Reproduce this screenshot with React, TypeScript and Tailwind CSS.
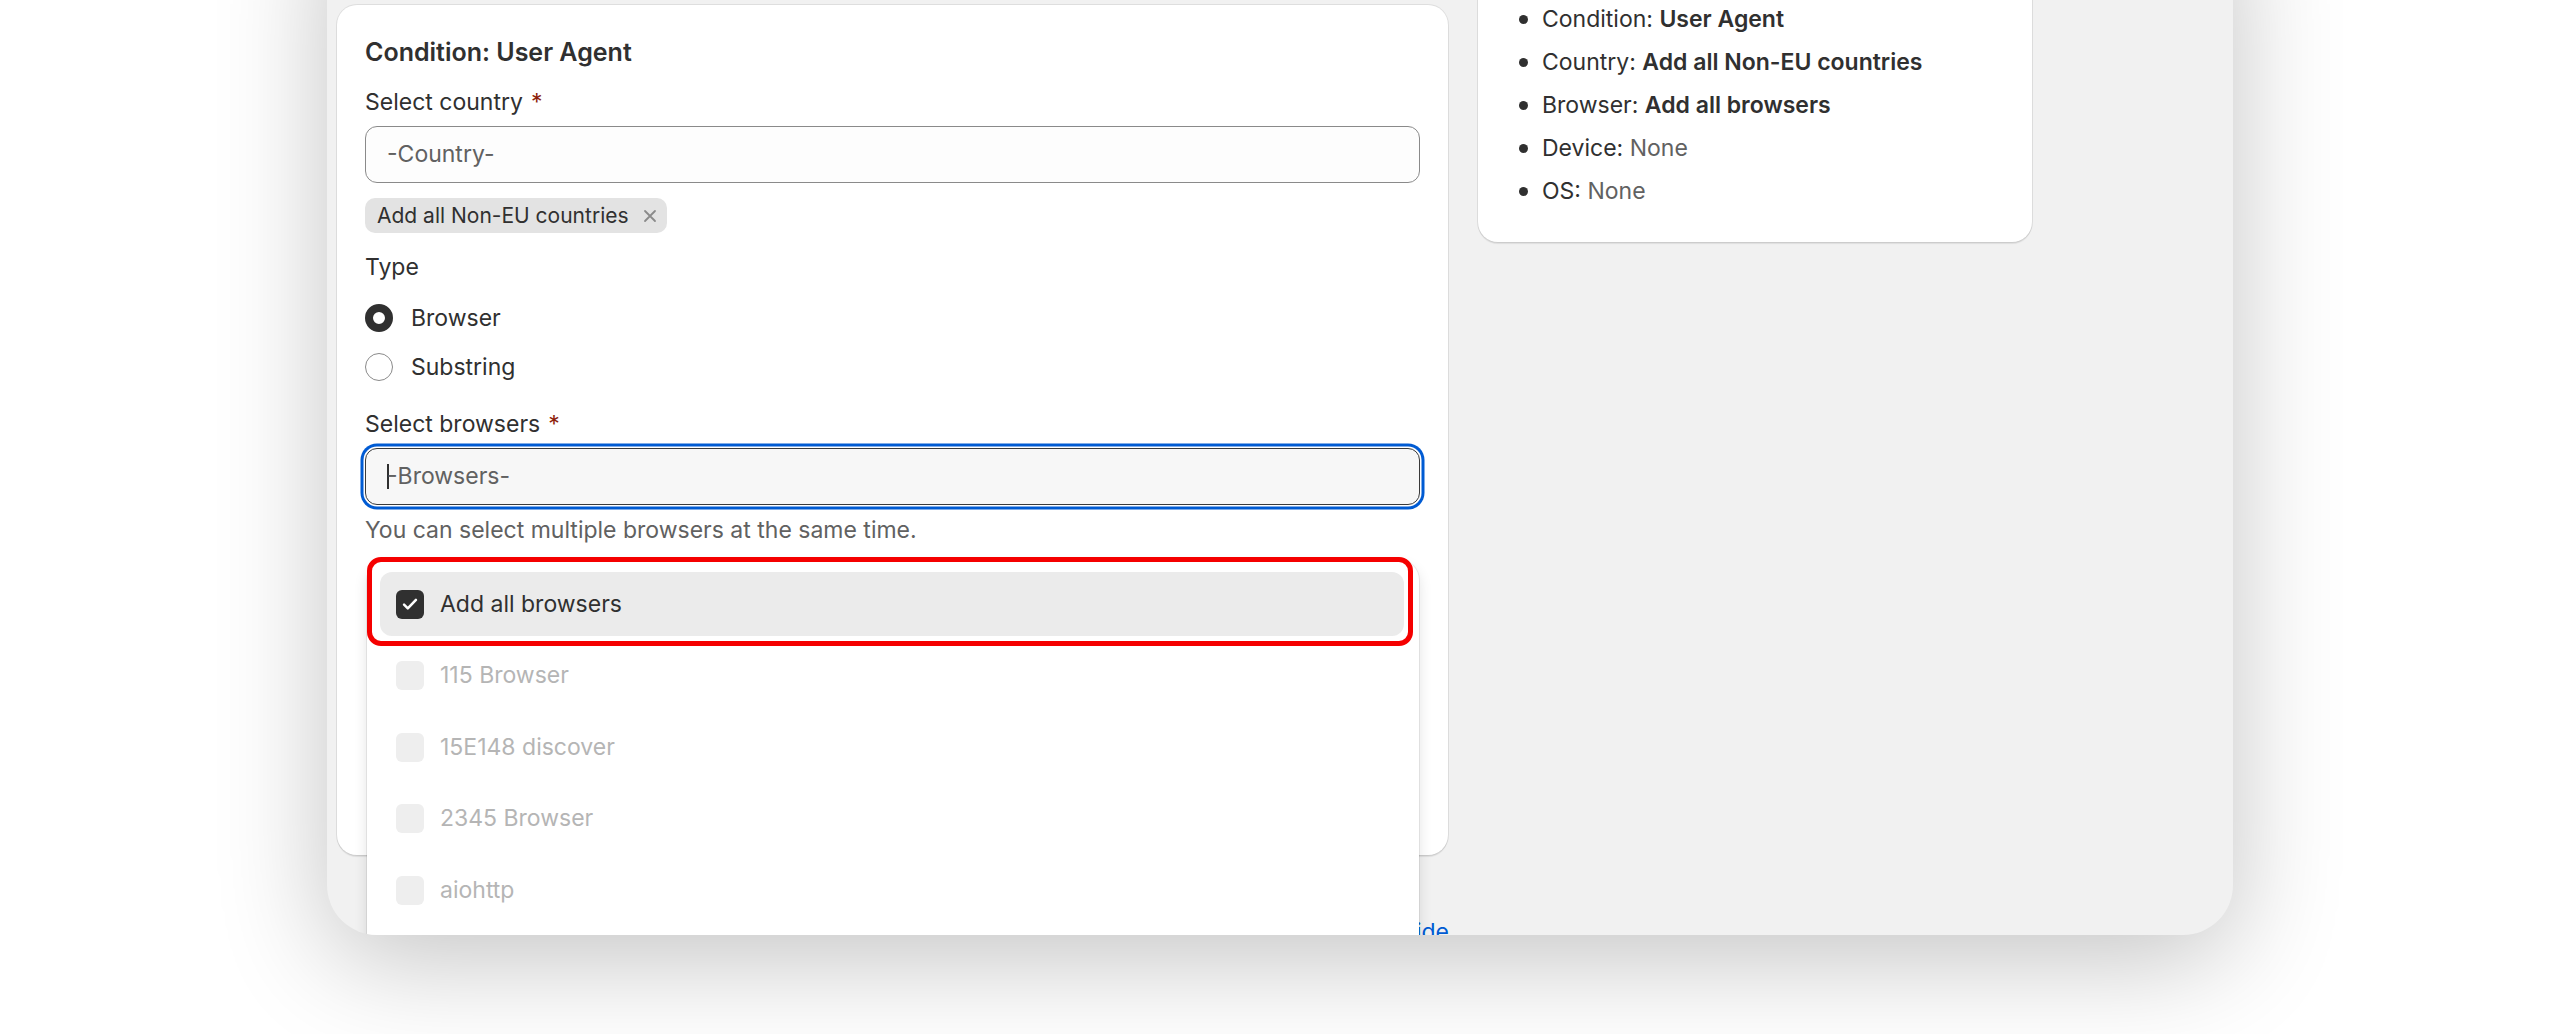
import { useState } from 'react';

const browsers = [
  '115 Browser',
  '15E148 discover',
  '2345 Browser',
  'aiohttp',
  'Amazon Silk',
  'Android Browser',
];

function CheckIcon() {
  return (
    <svg viewBox="0 0 20 20" className="h-[22px] w-[22px]" fill="none">
      <path d="M4.6 10.6l3.4 3.4 7.4-7.8" stroke="#fff" strokeWidth="2.3" strokeLinecap="round" strokeLinejoin="round" />
    </svg>
  );
}

function CloseIcon() {
  return (
    <svg viewBox="0 0 14 14" className="h-[14px] w-[14px]" fill="none">
      <path d="M2 2l10 10M12 2L2 12" stroke="#8a8a8a" strokeWidth="1.8" strokeLinecap="round" />
    </svg>
  );
}

function Label({ text, required }: { text: string; required?: boolean }) {
  return (
    <div className="text-[23px] leading-[36px] text-[#303030]">
      {text}
      {required && <span className="ml-[8px] text-[#8e1f0b]">*</span>}
    </div>
  );
}

function Radio({ label, checked }: { label: string; checked?: boolean }) {
  return (
    <label className="flex items-center gap-[18px]">
      {checked ? (
        <span className="h-[28px] w-[28px] rounded-full border-[8px] border-[#303030] bg-white" />
      ) : (
        <span className="h-[28px] w-[28px] rounded-full border-[1.5px] border-[#8a8a8a] bg-white" />
      )}
      <span className="text-[23px] leading-[36px] text-[#303030]">{label}</span>
    </label>
  );
}

function BrowserDropdown() {
  return (
    <div className="absolute left-[30px] top-[555px] h-[520px] w-[1052px] rounded-[20px] bg-white shadow-[0_0_0_1px_rgba(0,0,0,0.07),0_6px_14px_rgba(0,0,0,0.12)]">
      <div className="flex flex-col gap-[7.5px] pt-[12px]">
        <div className="mx-[13px] mr-[15px] flex h-[64px] items-center gap-[16px] rounded-[12px] bg-[#ebebeb] px-[16px]">
          <span className="flex h-[29px] w-[28px] items-center justify-center rounded-[6px] bg-[#303030]">
            <CheckIcon />
          </span>
          <span className="text-[23px] text-[#303030]">Add all browsers</span>
        </div>
        {browsers.map((b) => (
          <div key={b} className="mx-[13px] mr-[15px] flex h-[64px] items-center gap-[16px] rounded-[12px] px-[16px]">
            <span className="h-[29px] w-[28px] rounded-[6px] bg-[#eeeeee]" />
            <span className="text-[23px] text-[#b5b5b5]">{b}</span>
          </div>
        ))}
      </div>
      {/* red highlight drawn over the first option */}
      <div className="pointer-events-none absolute left-0 top-[-3px] h-[89px] w-[1046px] rounded-[14px] border-[5px] border-[#f50000]" />
    </div>
  );
}

function ConditionCard() {
  const [open] = useState(true);
  return (
    <div className="relative mt-[83px] w-[1111px] rounded-[20px] bg-white px-[28px] pb-[28px] pt-[29px] shadow-[0_0_0_1px_rgba(0,0,0,0.08),0_2px_1px_rgba(0,0,0,0.08)]">
      <h2 className="text-[25px] font-semibold leading-[36px] text-[#303030]">Condition: User Agent</h2>

      <div className="mt-[14px]">
        <Label text="Select country" required />
      </div>
      <div className="mt-[6px] flex h-[57px] items-center rounded-[12px] border border-[#8a8a8a] bg-[#fdfdfd] pl-[21px] text-[23px] text-[#616161]">
        -Country-
      </div>
      <div className="mt-[15px] flex">
        <span className="flex h-[35px] items-center gap-[14px] rounded-[10px] bg-[#e3e3e3] pl-[12px] pr-[10px] text-[21px] text-[#303030]">
          Add all Non-EU countries
          <CloseIcon />
        </span>
      </div>

      <div className="mt-[16px] text-[23px] leading-[36px] text-[#303030]">Type</div>
      <div className="mt-[15px] flex flex-col gap-[13px]">
        <Radio label="Browser" checked />
        <Radio label="Substring" />
      </div>

      <div className="mt-[21px]">
        <Label text="Select browsers" required />
      </div>
      <div className="mt-[6px] flex h-[57px] items-center rounded-[12px] border border-[#3a3a3a] bg-[#f7f7f7] pl-[21px] text-[23px] text-[#616161] shadow-[0_0_0_1.5px_#fff,0_0_0_4.5px_#005bd3]">
        <span className="-mr-[2px] h-[25px] w-[2px] bg-[#303030]" />
        -Browsers-
      </div>
      <div className="mt-[7px] text-[23px] leading-[36px] text-[#616161]">
        You can select multiple browsers at the same time.
      </div>
      <div className="h-[279px]" />

      {open && <BrowserDropdown />}
    </div>
  );
}

function SummaryCard() {
  const rows: { label: string; value: string; bold: boolean }[] = [
    { label: 'Condition:', value: 'User Agent', bold: true },
    { label: 'Country:', value: 'Add all Non-EU countries', bold: true },
    { label: 'Browser:', value: 'Add all browsers', bold: true },
    { label: 'Device:', value: 'None', bold: false },
    { label: 'OS:', value: 'None', bold: false },
  ];
  return (
    <div className="w-[554px] rounded-[20px] bg-white px-[28px] pb-[33px] pt-[29px] shadow-[0_0_0_1px_rgba(0,0,0,0.08),0_2px_1px_rgba(0,0,0,0.08)]">
      <h2 className="text-[25px] font-semibold leading-[36px] text-[#303030]">Summary</h2>
      <ul className="mt-[14px] flex flex-col gap-[7px] pl-[13px]">
        {rows.map((r) => (
          <li key={r.label} className="flex items-center gap-[14px] text-[23px] leading-[36px] text-[#303030]">
            <span className="h-[9px] w-[9px] rounded-full bg-[#303030]" />
            <span>
              {r.label}{' '}
              {r.bold ? (
                <span className="font-semibold">{r.value}</span>
              ) : (
                <span className="text-[#616161]">{r.value}</span>
              )}
            </span>
          </li>
        ))}
      </ul>
    </div>
  );
}

export default function App() {
  return (
    <div className="h-[1034px] w-full overflow-hidden bg-white font-[Inter,sans-serif]">
      <div className="-mt-[100px] ml-[327px] h-[1035px] w-[1906px] overflow-hidden rounded-b-[50px] bg-[#f1f1f1] shadow-[0_24px_110px_rgba(0,0,0,0.24)]">
        <div className="flex w-[1705px] flex-col pl-[10px] pt-[22px]">
          <div className="flex items-start gap-[30px]">
            <ConditionCard />
            <SummaryCard />
          </div>
          <div className="mt-[59px] pr-[12px] text-center text-[23px] leading-[36px] text-[#005bd3]">
            Learn more about the conditions in the user guide
          </div>
        </div>
      </div>
    </div>
  );
}
